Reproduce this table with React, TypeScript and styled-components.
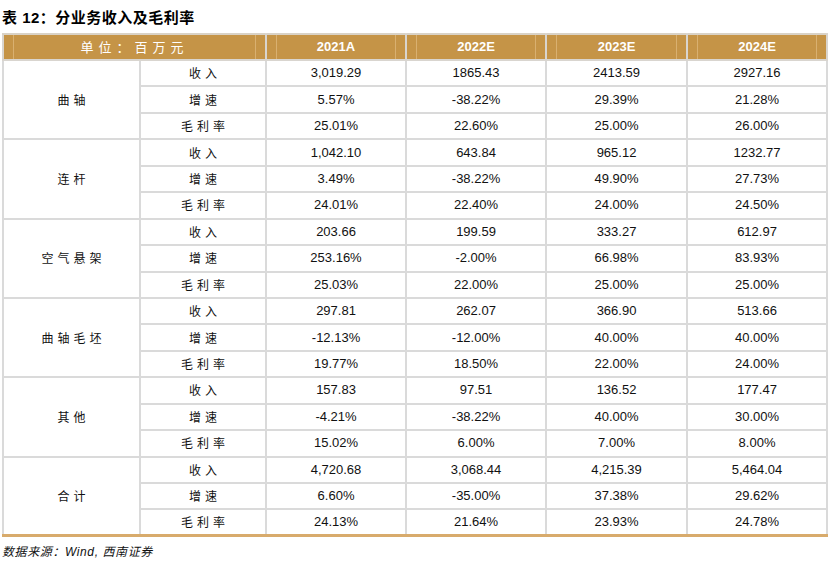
import React from "react";
import styled, { createGlobalStyle } from "styled-components";

const Global = createGlobalStyle`
  html, body { margin: 0; padding: 0; background: #fff; }
  body { font-family: "Liberation Sans", Arial, sans-serif; color: #000; }
`;

const Page = styled.div`
  width: 834px;
  height: 564px;
  padding: 9px 0 0 2px;
  box-sizing: border-box;
`;

const Title = styled.div`
  font-family: "Liberation Sans", "Noto Sans CJK SC", sans-serif;
  font-weight: bold;
  font-size: 15px;
  line-height: 18px;
  height: 22px;
  letter-spacing: 0.5px;
`;

const Table = styled.table`
  width: 824px;
  border-collapse: collapse;
  table-layout: fixed;
  margin-top: 2px;
`;

const Col = styled.col<{ $w: number }>`
  width: ${(p) => p.$w}px;
`;

const HeadCell = styled.th`
  background: #c59447;
  color: #fff;
  font-weight: bold;
  font-size: 13px;
  height: 24px;
  padding: 0 9px;
  border: 2px solid #d9d5cf;
  border-top-color: #d9d2c6;
  box-sizing: border-box;
`;

const HeadInner = styled.div<{ $cjk?: boolean }>`
  height: 24px;
  line-height: 24px;
  border-left: 1px solid rgba(255, 230, 190, 0.35);
  border-right: 1px solid rgba(255, 230, 190, 0.35);
  font-family: ${(p) =>
    p.$cjk ? `"Noto Sans CJK SC", sans-serif` : `"Liberation Sans", Arial, sans-serif`};
  font-weight: ${(p) => (p.$cjk ? 400 : 700)};
  letter-spacing: ${(p) => (p.$cjk ? "5px" : "0")};
  font-size: 13px;
`;

const Cell = styled.td<{ $cjk?: boolean; $last?: boolean }>`
  height: 26.45px;
  padding: 0;
  text-align: center;
  border: 2px solid #dadada;
  border-bottom: ${(p) => (p.$last ? "3px solid #d8ab6c" : "2px solid #dadada")};
  font-family: ${(p) =>
    p.$cjk ? `"Noto Sans CJK SC", sans-serif` : `"Liberation Sans", Arial, sans-serif`};
  font-size: ${(p) => (p.$cjk ? "12px" : "13px")};
  letter-spacing: ${(p) => (p.$cjk ? "4px" : "0")};
  text-indent: ${(p) => (p.$cjk ? "4px" : "0")};
  color: #111;
  line-height: 16px;
  box-sizing: border-box;
`;

const Source = styled.div`
  font-family: "Liberation Sans", "Noto Sans CJK SC", sans-serif;
  font-style: italic;
  font-size: 12px;
  margin-top: 5px;
  letter-spacing: 0.6px;
  color: #111;
`;

type Group = { name: string; rows: [string, string[]][] };

const groups: Group[] = [
  {
    name: "曲轴",
    rows: [
      ["收入", ["3,019.29", "1865.43", "2413.59", "2927.16"]],
      ["增速", ["5.57%", "-38.22%", "29.39%", "21.28%"]],
      ["毛利率", ["25.01%", "22.60%", "25.00%", "26.00%"]],
    ],
  },
  {
    name: "连杆",
    rows: [
      ["收入", ["1,042.10", "643.84", "965.12", "1232.77"]],
      ["增速", ["3.49%", "-38.22%", "49.90%", "27.73%"]],
      ["毛利率", ["24.01%", "22.40%", "24.00%", "24.50%"]],
    ],
  },
  {
    name: "空气悬架",
    rows: [
      ["收入", ["203.66", "199.59", "333.27", "612.97"]],
      ["增速", ["253.16%", "-2.00%", "66.98%", "83.93%"]],
      ["毛利率", ["25.03%", "22.00%", "25.00%", "25.00%"]],
    ],
  },
  {
    name: "曲轴毛坯",
    rows: [
      ["收入", ["297.81", "262.07", "366.90", "513.66"]],
      ["增速", ["-12.13%", "-12.00%", "40.00%", "40.00%"]],
      ["毛利率", ["19.77%", "18.50%", "22.00%", "24.00%"]],
    ],
  },
  {
    name: "其他",
    rows: [
      ["收入", ["157.83", "97.51", "136.52", "177.47"]],
      ["增速", ["-4.21%", "-38.22%", "40.00%", "30.00%"]],
      ["毛利率", ["15.02%", "6.00%", "7.00%", "8.00%"]],
    ],
  },
  {
    name: "合计",
    rows: [
      ["收入", ["4,720.68", "3,068.44", "4,215.39", "5,464.04"]],
      ["增速", ["6.60%", "-35.00%", "37.38%", "29.62%"]],
      ["毛利率", ["24.13%", "21.64%", "23.93%", "24.78%"]],
    ],
  },
];

const years = ["2021A", "2022E", "2023E", "2024E"];
const widths = [137, 126, 140, 140, 141, 140];

export default function App() {
  return (
    <Page>
      <Global />
      <Title>表 12：分业务收入及毛利率</Title>
      <Table>
        <colgroup>
          {widths.map((w, i) => (
            <Col key={i} $w={w} />
          ))}
        </colgroup>
        <thead>
          <tr>
            <HeadCell colSpan={2}>
              <HeadInner $cjk>单位：百万元</HeadInner>
            </HeadCell>
            {years.map((y) => (
              <HeadCell key={y}>
                <HeadInner>{y}</HeadInner>
              </HeadCell>
            ))}
          </tr>
        </thead>
        <tbody>
          {groups.map((g, gi) =>
            g.rows.map(([label, vals], i) => {
              const lastRow = gi === groups.length - 1 && i === 2;
              return (
                <tr key={g.name + label}>
                  {i === 0 && (
                    <Cell $cjk rowSpan={3} $last={gi === groups.length - 1}>
                      {g.name}
                    </Cell>
                  )}
                  <Cell $cjk $last={lastRow}>
                    {label}
                  </Cell>
                  {vals.map((v, k) => (
                    <Cell key={k} $last={lastRow}>
                      {v}
                    </Cell>
                  ))}
                </tr>
              );
            })
          )}
        </tbody>
      </Table>
      <Source>数据来源：Wind, 西南证券</Source>
    </Page>
  );
}
